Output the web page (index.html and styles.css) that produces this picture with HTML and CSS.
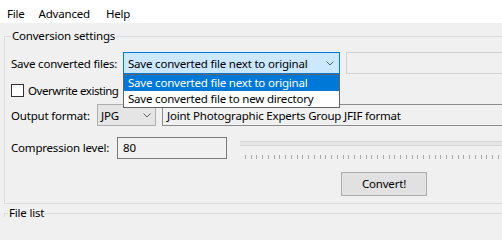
FILE: index.html
```html
<!DOCTYPE html>
<html>
<head>
<meta charset="utf-8">
<link rel="stylesheet" href="styles.css">
</head>
<body>
<div class="menubar">
  <span class="menu-item">File</span>
  <span class="menu-item">Advanced</span>
  <span class="menu-item menu-help">Help</span>
</div>
<fieldset class="group">
  <legend>Conversion settings</legend>
  <div class="row row-save">
    <span class="lbl lbl-save">Save converted files:</span>
    <div class="combo combo-focus">
      <span class="combo-text">Save converted file next to original</span>
      <svg class="chev" width="8" height="5" viewBox="0 0 8 5"><path d="M0.5 0.5 L4 4 L7.5 0.5" fill="none" stroke="#606060" stroke-width="1"/></svg>
      <ul class="dropdown">
        <li class="sel">Save converted file next to original</li>
        <li>Save converted file to new directory</li>
      </ul>
    </div>
    <div class="textbox"></div>
  </div>
  <div class="row row-check">
    <span class="checkbox"></span>
    <span class="lbl lbl-check">Overwrite existing</span>
  </div>
  <div class="row row-format">
    <span class="lbl lbl-format">Output format:</span>
    <div class="combo combo-plain">
      <span class="combo-text">JPG</span>
      <svg class="chev chev-plain" width="8" height="5" viewBox="0 0 8 5"><path d="M0.5 0.5 L4 4 L7.5 0.5" fill="none" stroke="#606060" stroke-width="1"/></svg>
    </div>
    <div class="field-desc">Joint Photographic Experts Group JFIF format</div>
  </div>
  <div class="row row-comp">
    <span class="lbl lbl-comp">Compression level:</span>
    <div class="num">80</div>
    <div class="slider">
      <div class="track"></div>
      <div class="ticks"></div>
    </div>
  </div>
  <div class="row row-btn">
    <div class="btn">Convert!</div>
  </div>
</fieldset>
<fieldset class="group group-files">
  <legend>File list</legend>
</fieldset>
</body>
</html>
```
FILE: styles.css
```css
html, body {
  margin: 0;
  background: #f0f0f0;
  overflow: hidden;
}
body {
  width: 502px;
  height: 217px;
  font-family: "Noto Sans", "Open Sans", sans-serif;
  font-size: 11.5px;
  letter-spacing: -0.2px;
  color: #000;
}
.menubar {
  background: #fff;
  height: 23px;
  box-sizing: border-box;
  padding: 6px 0 0 0;
  display: flex;
  line-height: 16px;
}
.menu-item {
  padding: 0 7px;
}
.menu-help { margin-left: 2px; }
.group {
  margin: 5px 0 0 4px;
  border: 1px solid #dcdcdc;
  border-right: none;
  padding: 0 0 7px 6px;
  width: 498px;
  box-sizing: border-box;
  min-width: 0;
}
.group legend {
  padding: 0 1px;
  line-height: 16px;
}
.group-files {
  margin-top: 1px;
  padding: 0 0 0 3px;
  height: 12px;
  border-bottom: none;
}
.row {
  display: flex;
  align-items: center;
  white-space: nowrap;
}
.lbl { flex: none; }
.row-save {
  margin-top: 8px;
  height: 22px;
}
.lbl-save { width: 112px; }
.combo {
  flex: none;
  position: relative;
  height: 22px;
  box-sizing: border-box;
  border: 1px solid;
  display: flex;
  align-items: center;
}
.combo-text {
  flex: 1;
}
.combo-focus {
  width: 217px;
  border-color: #0078d7;
  background: #cce8ff;
  padding-left: 4px;
}
.chev { margin-right: 5px; flex: none; }
.chev-plain { margin-right: 4px; }
.dropdown {
  position: absolute;
  top: 21px;
  left: -1px;
  width: 217px;
  box-sizing: border-box;
  margin: 0;
  padding: 0;
  list-style: none;
  background: #fff;
  border: 1px solid #646464;
  z-index: 2;
}
.dropdown li {
  height: 16px;
  line-height: 16px;
  padding-left: 4px;
}
.dropdown li.sel {
  background: #0078d7;
  color: #fff;
}
.textbox {
  flex: 1;
  height: 22px;
  margin-left: 6px;
  box-sizing: border-box;
  border: 1px solid #d0d0d0;
  border-right: none;
  background: #f0f0f0;
}
.row-check {
  margin-top: 8px;
  height: 16px;
}
.checkbox {
  flex: none;
  width: 13px;
  height: 13px;
  box-sizing: border-box;
  border: 1px solid #333;
  background: #fff;
  margin-right: 4px;
}
.lbl-check { letter-spacing: -0.45px; }
.row-format {
  margin-top: 6px;
  height: 22px;
}
.lbl-format { width: 86px; }
.combo-plain {
  width: 59px;
  border-color: #adadad;
  background: #e5e5e5;
  padding-left: 3px;
}
.field-desc {
  flex: 1;
  margin-left: 6px;
  height: 22px;
  box-sizing: border-box;
  border: 1px solid #8c8c8c;
  border-right: none;
  background: #f0f0f0;
  padding-left: 4px;
  display: flex;
  align-items: center;
}
.row-comp {
  margin-top: 11px;
  height: 22px;
  align-items: flex-start;
}
.lbl-comp {
  width: 106px;
  line-height: 22px;
}
.num {
  flex: none;
  width: 110px;
  height: 22px;
  box-sizing: border-box;
  border: 1px solid #7a7a7a;
  background: #f0f0f0;
  padding-left: 5px;
  line-height: 20px;
}
.slider {
  flex: 1;
  margin-left: 13px;
  height: 24px;
}
.track {
  margin-top: 4px;
  height: 5px;
  box-sizing: border-box;
  border-top: 1px solid #d6d6d6;
  border-bottom: 1px solid #d6d6d6;
  background: #e7e7e7;
}
.ticks {
  margin: 9px 0 0 5px;
  height: 4px;
  background: repeating-linear-gradient(to right, #a8a8a8 0 1px, transparent 1px 5.75px);
}
.row-btn {
  margin-top: 13px;
}
.btn {
  margin-left: 330px;
  width: 86px;
  height: 24px;
  box-sizing: border-box;
  border: 1px solid #adadad;
  background: #e1e1e1;
  text-align: center;
  line-height: 22px;
}
```
